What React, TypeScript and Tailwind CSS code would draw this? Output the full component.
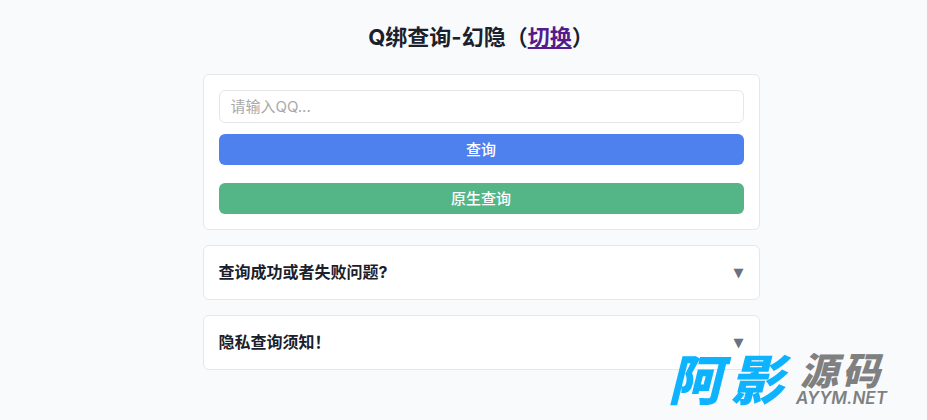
import React, { useState } from 'react'

const topics = ['查询成功或者失败问题?', '隐私查询须知！']

const card = 'rounded-md border border-gray-200 bg-white'

function QueryForm() {
  return (
    <form
      className={`${card} flex flex-col p-[15px]`}
      onSubmit={(e) => e.preventDefault()}
    >
      <input
        type="text"
        aria-label="请输入QQ"
        placeholder="请输入QQ..."
        className="
          h-[33px] w-full px-[11px]
          rounded-md border border-gray-200 bg-white
          text-[15px] text-gray-900 placeholder:text-[#a9a9a9]
        "
      />
      <button
        type="submit"
        className="mt-[11px] h-[31px] rounded-md bg-[#4e80ee] text-[15px] leading-5 font-medium text-white"
      >
        查询
      </button>
      <button
        type="button"
        className="mt-[18px] h-[31px] rounded-md bg-[#54b686] text-[15px] leading-5 font-medium text-white"
      >
        原生查询
      </button>
    </form>
  )
}

function Topic({ title }: { title: string }) {
  const [open, setOpen] = useState(false)

  return (
    <section className={card}>
      <h2>
        <button
          type="button"
          aria-expanded={open}
          onClick={() => setOpen(!open)}
          className="flex w-full items-center justify-between p-[15px] text-left text-base leading-[23px] font-bold text-[#1a202c]"
        >
          <span>{title}</span>
          <span className="font-['DejaVu_Sans'] text-[13px] leading-4 font-normal text-gray-500">▼</span>
        </button>
      </h2>
    </section>
  )
}

// Site mark that floats over the bottom right corner
function SiteMark() {
  return (
    <div
      className="
        absolute top-[352px] left-[668px]
        flex items-start whitespace-nowrap italic
        font-['Noto_Sans_CJK_SC',sans-serif] font-black
        pointer-events-none
      "
    >
      <span className="flex gap-2 text-[54px] leading-[50px] text-[#0db3ff]">
        <span>阿</span>
        <span>影</span>
      </span>
      <span className="flex flex-col pl-3 text-[#808080]">
        <span className="flex gap-1 pl-1 text-[38px] leading-[34px]">
          <span>源</span>
          <span>码</span>
        </span>
        <span className="font-[Inter,sans-serif] text-[17px] leading-6 font-semibold">AYYM.NET</span>
      </span>
    </div>
  )
}

export default function App() {
  return (
    <div className="relative min-h-screen overflow-hidden bg-[#f9fafc] pl-[35px] font-[Inter,'Noto_Sans_CJK_SC',sans-serif]">
      <main className="mx-auto flex max-w-[557px] flex-col gap-[15px] pt-5 pb-12">
        <h1 className="mb-1 text-center text-[22px] leading-[35px] font-bold text-[#1a202c]">
          Q绑查询-幻隐（
          <a href="#switch" className="text-[#551a8b] underline">切换</a>
          ）
        </h1>
        <QueryForm />
        {topics.map((title) => (
          <Topic key={title} title={title} />
        ))}
      </main>
      <SiteMark />
    </div>
  )
}
